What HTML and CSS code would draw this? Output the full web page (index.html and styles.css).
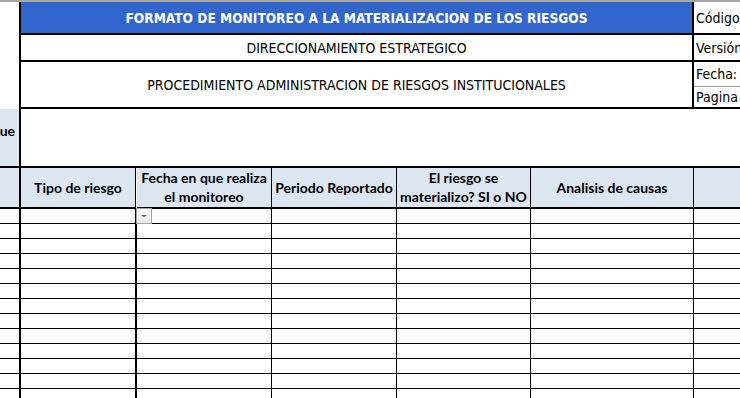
FILE: index.html
```html
<!DOCTYPE html>
<html lang="es">
<head>
<meta charset="utf-8">
<title>Formato de monitoreo</title>
<link rel="stylesheet" href="styles.css">
</head>
<body>
<div class="sheet">
  <div class="strip"></div>
  <div class="top">
    <div class="t-a"></div>
    <div class="t-title">FORMATO DE MONITOREO A LA MATERIALIZACION DE LOS RIESGOS</div>
    <div class="t-meta t-codigo">Código</div>
    <div class="t-main t-dir">DIRECCIONAMIENTO ESTRATEGICO</div>
    <div class="t-meta t-version">Versión</div>
    <div class="t-main t-proc">PROCEDIMIENTO ADMINISTRACION DE RIESGOS INSTITUCIONALES</div>
    <div class="t-split">
      <div class="t-meta t-fecha">Fecha:</div>
      <div class="t-meta t-pagina">Pagina</div>
    </div>
  </div>
  <div class="blank">
    <div class="b-a"><span>ue</span></div>
    <div class="b-rest"></div>
  </div>
  <div class="grid head">
    <div class="c ca"></div>
    <div class="c cb">Tipo de riesgo</div>
    <div class="c cc">Fecha en que realiza<br>el monitoreo</div>
    <div class="c cd">Periodo Reportado</div>
    <div class="c ce">El riesgo se<br>materializo? SI o NO</div>
    <div class="c cf">Analisis de causas</div>
    <div class="c cg"></div>
  </div>
  <div class="grid row first">
    <div class="c ca"></div><div class="c cb"></div><div class="c cc"><span class="filter"><i></i></span></div><div class="c cd"></div><div class="c ce"></div><div class="c cf"></div><div class="c cg"></div>
  </div>
  <div class="grid row"><div class="c ca"></div><div class="c cb"></div><div class="c cc"></div><div class="c cd"></div><div class="c ce"></div><div class="c cf"></div><div class="c cg"></div></div>
  <div class="grid row"><div class="c ca"></div><div class="c cb"></div><div class="c cc"></div><div class="c cd"></div><div class="c ce"></div><div class="c cf"></div><div class="c cg"></div></div>
  <div class="grid row"><div class="c ca"></div><div class="c cb"></div><div class="c cc"></div><div class="c cd"></div><div class="c ce"></div><div class="c cf"></div><div class="c cg"></div></div>
  <div class="grid row"><div class="c ca"></div><div class="c cb"></div><div class="c cc"></div><div class="c cd"></div><div class="c ce"></div><div class="c cf"></div><div class="c cg"></div></div>
  <div class="grid row"><div class="c ca"></div><div class="c cb"></div><div class="c cc"></div><div class="c cd"></div><div class="c ce"></div><div class="c cf"></div><div class="c cg"></div></div>
  <div class="grid row"><div class="c ca"></div><div class="c cb"></div><div class="c cc"></div><div class="c cd"></div><div class="c ce"></div><div class="c cf"></div><div class="c cg"></div></div>
  <div class="grid row"><div class="c ca"></div><div class="c cb"></div><div class="c cc"></div><div class="c cd"></div><div class="c ce"></div><div class="c cf"></div><div class="c cg"></div></div>
  <div class="grid row"><div class="c ca"></div><div class="c cb"></div><div class="c cc"></div><div class="c cd"></div><div class="c ce"></div><div class="c cf"></div><div class="c cg"></div></div>
  <div class="grid row"><div class="c ca"></div><div class="c cb"></div><div class="c cc"></div><div class="c cd"></div><div class="c ce"></div><div class="c cf"></div><div class="c cg"></div></div>
  <div class="grid row"><div class="c ca"></div><div class="c cb"></div><div class="c cc"></div><div class="c cd"></div><div class="c ce"></div><div class="c cf"></div><div class="c cg"></div></div>
  <div class="grid row"><div class="c ca"></div><div class="c cb"></div><div class="c cc"></div><div class="c cd"></div><div class="c ce"></div><div class="c cf"></div><div class="c cg"></div></div>
  <div class="grid row"><div class="c ca"></div><div class="c cb"></div><div class="c cc"></div><div class="c cd"></div><div class="c ce"></div><div class="c cf"></div><div class="c cg"></div></div>
</div>
</body>
</html>
```
FILE: styles.css
```css
html, body {
  margin: 0;
  padding: 0;
  overflow: hidden;
  background: #fff;
}
.sheet {
  width: 760px;
  color: #000;
}
.strip {
  height: 2px;
  background: #a8a8a8;
}
.top {
  display: grid;
  grid-template-columns: 21px 673px 66px;
  grid-template-rows: 33px 27px 47px;
  font-family: "DejaVu Sans Condensed", "DejaVu Sans", sans-serif;
  font-size: 14px;
}
.top > div {
  box-sizing: border-box;
}
.t-a {
  grid-row: 1 / 4;
  border-right: 2px solid #000;
}
.t-title {
  background: #3366cc;
  color: #fff;
  font-weight: bold;
  font-size: 13.6px;
  display: flex;
  align-items: center;
  justify-content: center;
  border-right: 2px solid #000;
  border-bottom: 2px solid #000;
}
.t-main {
  display: flex;
  align-items: center;
  justify-content: center;
  border-right: 2px solid #000;
  border-bottom: 2px solid #000;
}
.t-meta {
  display: flex;
  align-items: center;
  padding-left: 2px;
  white-space: nowrap;
  overflow: hidden;
}
.t-codigo, .t-version {
  border-bottom: 2px solid #000;
}
.t-split {
  display: grid;
  grid-template-rows: 25px 22px;
}
.t-fecha {
  border-bottom: 1px solid #9e9e9e;
  box-sizing: border-box;
}
.t-pagina {
  border-bottom: 2px solid #000;
  box-sizing: border-box;
}
.blank {
  display: grid;
  grid-template-columns: 21px 1fr;
  height: 59px;
}
.blank > div {
  box-sizing: border-box;
  border-bottom: 2px solid #000;
}
.b-a {
  background: #dce6f1;
  border-right: 2px solid #000;
  display: flex;
  align-items: center;
  justify-content: flex-end;
  padding-right: 4px;
  padding-bottom: 14px;
  font-family: "Lato", sans-serif;
  font-weight: bold;
  font-size: 14px;
}
.grid {
  display: grid;
  grid-template-columns: 21px 116px 135px 125px 134px 163px 66px;
}
.c {
  box-sizing: border-box;
  border-right: 1px solid #000;
  border-bottom: 1px solid #000;
  position: relative;
}
.ca, .cb {
  border-right-width: 2px;
}
.head {
  height: 40px;
}
.head .c {
  background: #dce6f1;
  border-bottom-width: 2px;
  display: flex;
  align-items: center;
  justify-content: center;
  text-align: center;
  font-family: "Lato", sans-serif;
  font-weight: bold;
  font-size: 14px;
  line-height: 19px;
  padding-bottom: 1px;
}
.head .cb {
  border-right-width: 1px;
  width: 115px;
}
.row {
  height: 15px;
}
.row.first {
  height: 16px;
}
.filter {
  position: absolute;
  left: -1px;
  top: 0;
  width: 16px;
  height: 16px;
  box-sizing: border-box;
  border: 1px solid #a3a3a3;
  background: linear-gradient(#fbfbfb, #e6e6e6);
  display: flex;
  align-items: center;
  justify-content: center;
  z-index: 2;
}
.filter i {
  width: 0;
  height: 0;
  border-left: 3px solid transparent;
  border-right: 3px solid transparent;
  border-top: 2px solid #555;
}
```
